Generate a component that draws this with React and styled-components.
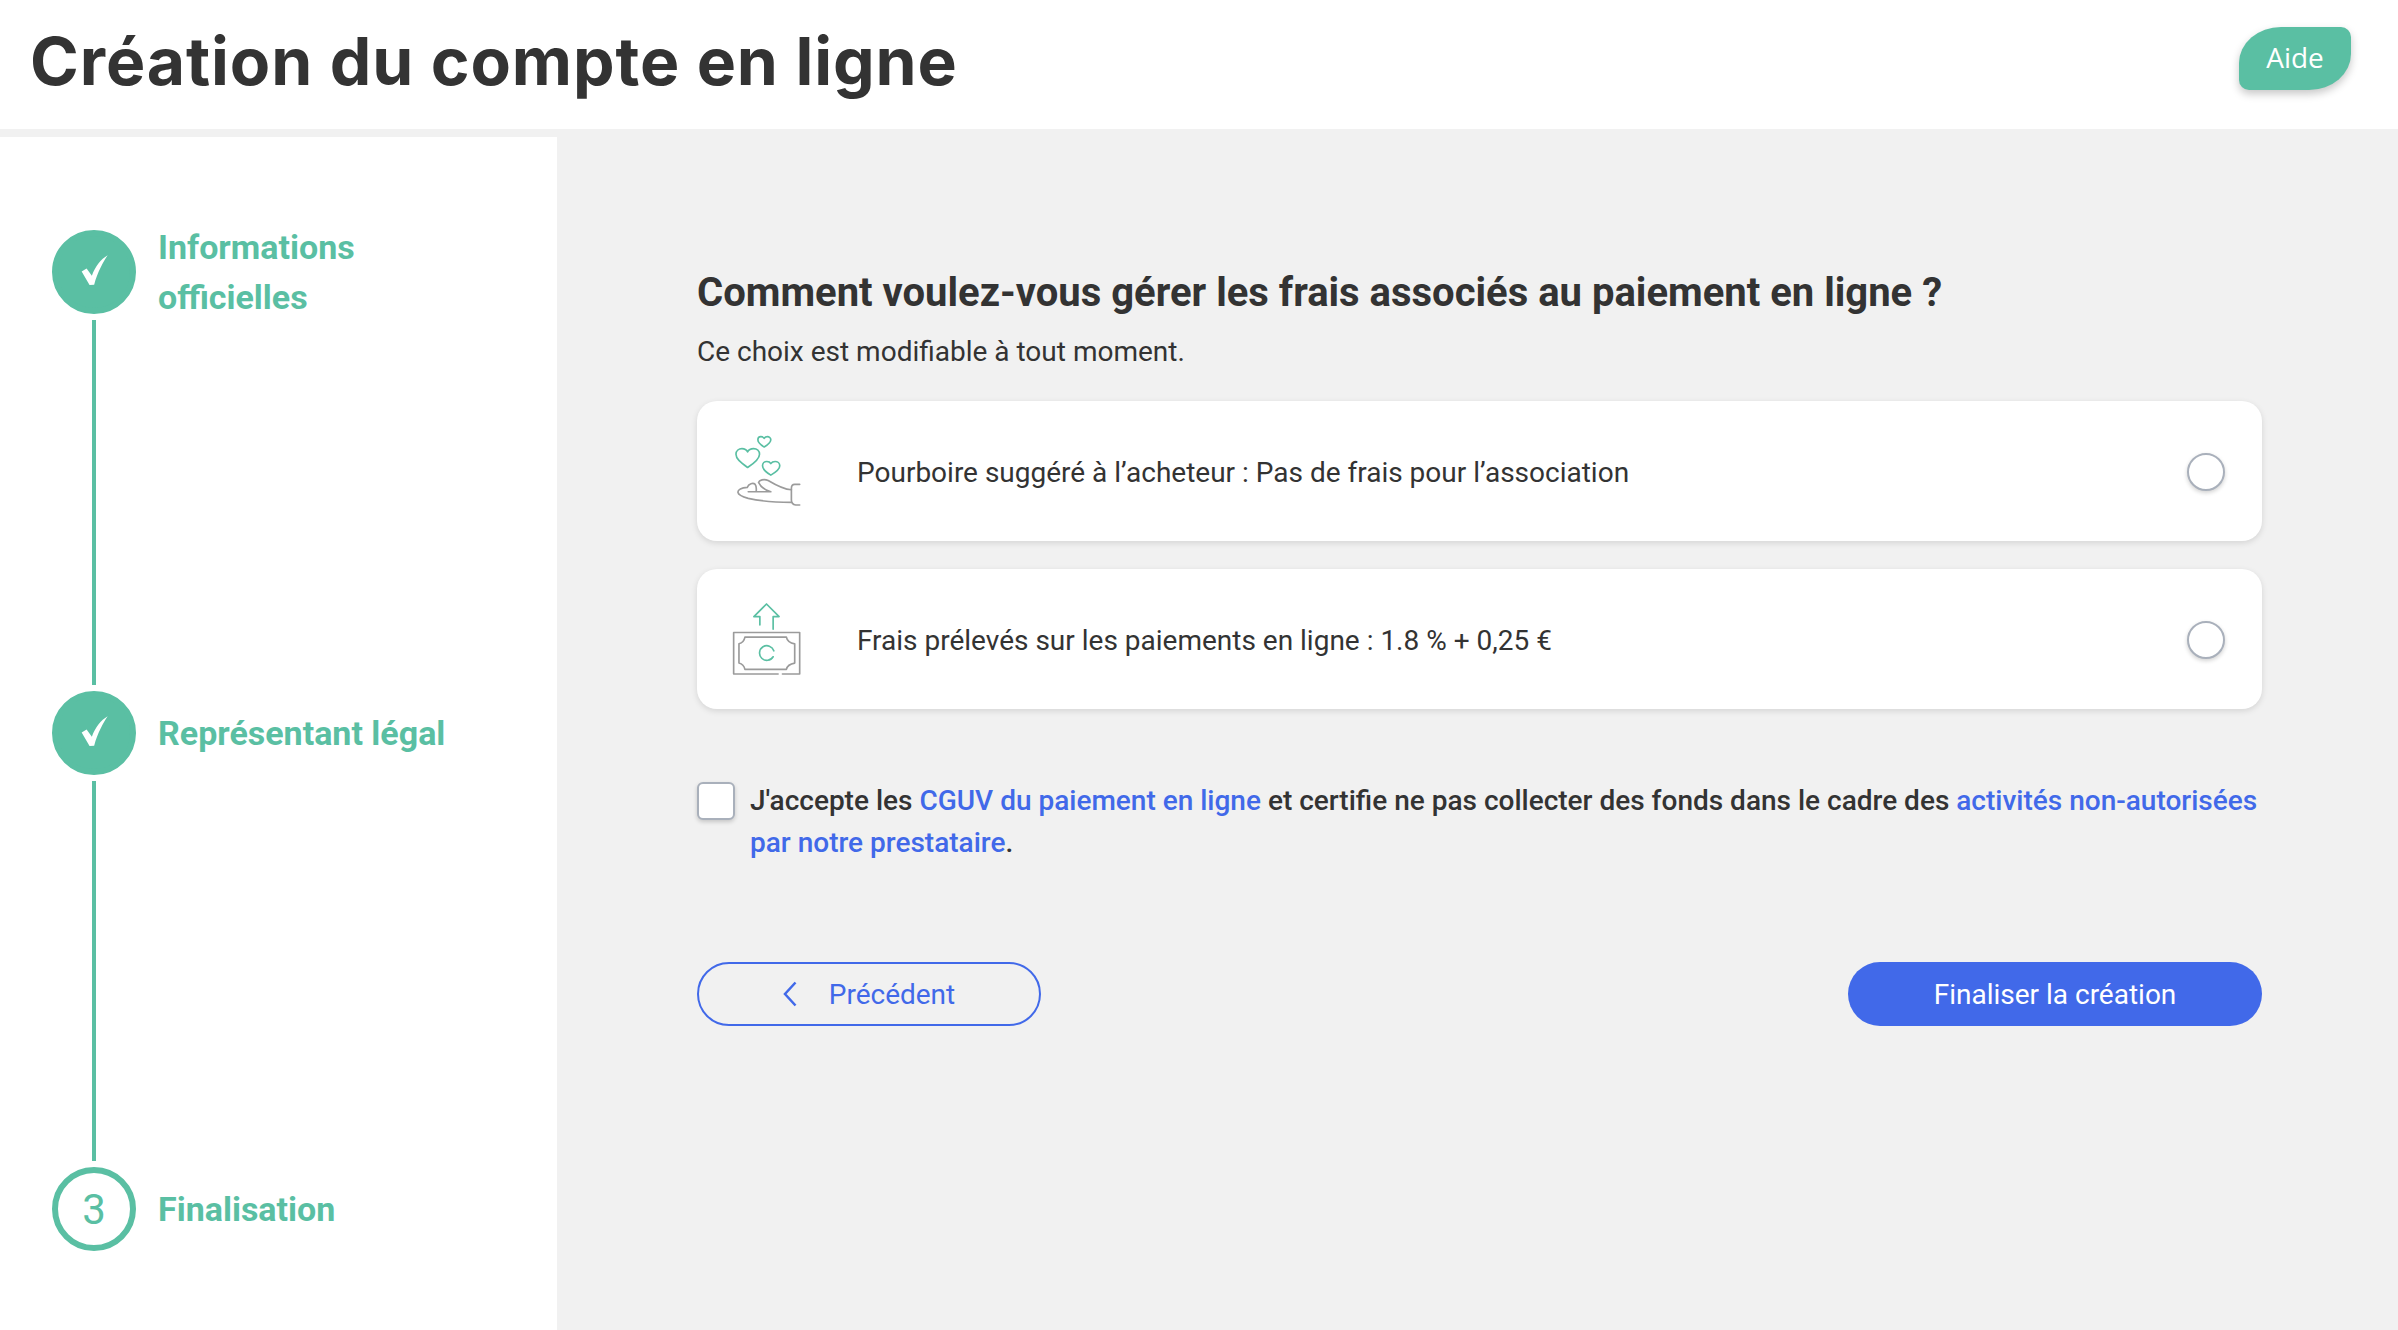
import styled, { createGlobalStyle } from "styled-components";

const TEAL = "#5abfa3";
const BLUE = "#4169e9";
const DARK = "#333333";
const GREY = "#9b9b9b";

const GlobalStyle = createGlobalStyle`
  html, body {
    margin: 0;
    padding: 0;
    background: #f1f1f1;
    font-family: "Roboto", "Liberation Sans", sans-serif;
    color: ${DARK};
  }
  * { box-sizing: border-box; }
`;

const Page = styled.div`
  width: 2398px;
  height: 1330px;
  display: flex;
  flex-direction: column;
  overflow: hidden;
`;

/* Top bar */
const Header = styled.header`
  height: 129px;
  flex: none;
  background: #fff;
  display: flex;
  align-items: center;
  justify-content: space-between;
  padding: 0 47px 0 30px;
`;

const Title = styled.h1`
  margin: 0 0 6px;
  font-family: "Inter", sans-serif;
  font-size: 66px;
  font-weight: 700;
  line-height: 1.2;
  letter-spacing: 0.9px;
  color: ${DARK};
`;

const HelpButton = styled.button`
  width: 112px;
  height: 63px;
  margin-top: -13px;
  border: 0;
  padding: 0 0 2px;
  background: ${TEAL};
  color: #fff;
  font-family: "Open Sans", sans-serif;
  font-size: 28px;
  border-radius: 42px 10px 42px 10px / 36px 10px 36px 10px;
  box-shadow: 0 4px 8px rgba(0, 0, 0, 0.22);
`;

const Content = styled.div`
  flex: 1;
  display: flex;
  min-height: 0;
`;

/* Left stepper */
const Sidebar = styled.aside`
  width: 557px;
  flex: none;
  margin-top: 8px;
  background: #fff;
  padding: 93px 0 0 52px;
  display: flex;
  flex-direction: column;
`;

const Step = styled.div`
  display: flex;
  align-items: center;
  gap: 22px;
  height: 84px;
`;

const StepCircle = styled.div`
  width: 84px;
  height: 84px;
  flex: none;
  border-radius: 50%;
  display: flex;
  align-items: center;
  justify-content: center;
  background: ${(p) => (p.$done ? TEAL : "#fff")};
  border: 6px solid ${TEAL};
  color: ${TEAL};
  font-size: 42px;
  font-weight: 400;
`;

const StepLabel = styled.div`
  font-size: 34px;
  font-weight: 700;
  line-height: 50px;
  color: ${TEAL};
`;

const Connector = styled.div`
  width: 4px;
  height: ${(p) => p.$height}px;
  margin: 6px 0 6px 40px;
  background: ${TEAL};
`;

/* Main column */
const Main = styled.main`
  flex: 1;
  padding: 139px 136px 0 140px;
`;

const Question = styled.h2`
  margin: 0;
  font-size: 40px;
  font-weight: 700;
  line-height: 50px;
  color: ${DARK};
`;

const Hint = styled.p`
  margin: 16px 0 31px;
  font-size: 28px;
  line-height: 36px;
`;

const OptionList = styled.div`
  display: flex;
  flex-direction: column;
  gap: 28px;
`;

const Option = styled.div`
  height: 140px;
  background: #fff;
  border-radius: 20px;
  box-shadow: 0 2px 6px rgba(0, 0, 0, 0.12);
  display: flex;
  align-items: center;
  padding: 0 37px 0 33px;
`;

const OptionIcon = styled.svg`
  width: 73px;
  height: 78px;
  flex: none;
  fill: none;
  stroke-width: 5;
  stroke-linecap: round;
  stroke-linejoin: round;
`;

const OptionText = styled.span`
  flex: 1;
  margin-left: 54px;
  padding-top: 4px;
  font-size: 28px;
  line-height: 36px;
`;

const Radio = styled.span`
  width: 38px;
  height: 38px;
  flex: none;
  margin-top: 2px;
  border-radius: 50%;
  background: #fff;
  border: 2px solid #a9b0bb;
  box-shadow: 0 2px 4px rgba(0, 0, 0, 0.18);
`;

const Consent = styled.div`
  display: flex;
  gap: 15px;
  margin-top: 71px;
`;

const Checkbox = styled.span`
  width: 38px;
  height: 38px;
  flex: none;
  margin-top: 2px;
  border-radius: 6px;
  background: #fff;
  border: 2px solid #a9b0bb;
  box-shadow: 0 2px 4px rgba(0, 0, 0, 0.18);
`;

const ConsentText = styled.p`
  margin: 0;
  font-size: 28px;
  font-weight: 500;
  line-height: 42px;
`;

const Link = styled.span`
  color: ${BLUE};
`;

const Actions = styled.div`
  display: flex;
  justify-content: space-between;
  margin-top: 98px;
`;

const PrevButton = styled.button`
  width: 344px;
  height: 64px;
  border: 2px solid ${BLUE};
  border-radius: 32px;
  background: transparent;
  color: ${BLUE};
  font-family: inherit;
  font-size: 28px;
  display: flex;
  align-items: center;
  justify-content: center;
  gap: 32px;
  padding: 0;
`;

const NextButton = styled.button`
  width: 414px;
  height: 64px;
  border: 0;
  border-radius: 32px;
  background: ${BLUE};
  color: #fff;
  font-family: inherit;
  font-size: 28px;
  padding: 0;
`;

const CheckIcon = styled.svg`
  width: 27px;
  height: 31px;
  margin-top: -3px;
`;

const CheckMark = () => (
  <CheckIcon viewBox="120 105 82 94">
    <path
      d="M122 155 L137 146 L153 168 C163 140 180 118 201 106 C188 125 170 158 160 195 L146 196 Z"
      fill="#fff"
    />
  </CheckIcon>
);

const TipIcon = () => (
  <OptionIcon viewBox="120 110 220 235">
    <g stroke={TEAL}>
      <path d="M173 217 C150 200 138 190 138 177 C138 166 147 160 156 160 C164 160 170 164 173 170 C176 164 183 160 191 160 C201 160 209 167 209 177 C209 190 196 202 173 217Z" />
      <path d="M223 155 C212 148 204 142 204 133 C204 127 209 124 213 124 C218 124 221 126 223 129 C225 126 228 124 233 124 C238 124 243 128 243 133 C243 142 234 148 223 155Z" />
      <path d="M243 240 C230 232 218 223 218 212 C218 204 224 199 231 199 C236 199 241 201 243 205 C246 201 250 199 256 199 C263 199 270 204 270 212 C270 223 257 232 243 240Z" />
    </g>
    <g stroke={GREY}>
      <path d="M330 268 H315 Q305 268 305 280 V315 Q305 328 318 330 H330" />
      <path d="M305 284 C285 283 255 268 235 256 C222 250 208 255 206 262 C212 275 225 285 243 290 H175" />
      <path d="M305 322 C270 322 220 320 175 310 C160 306 145 300 144 292 C143 283 155 278 172 277 C176 265 190 262 196 268 C199 272 200 278 199 288" />
    </g>
  </OptionIcon>
);

const FeeIcon = () => (
  <OptionIcon viewBox="120 615 220 235">
    <g stroke={GREY}>
      <path d="M265 838 H131 V713 H330 V838 H278" />
      <path d="M165 727 H290 C292 738 302 745 315 747 V805 C302 807 292 815 290 824 H165 C163 815 155 807 147 805 V747 C155 745 163 738 165 727Z" />
    </g>
    <g stroke={TEAL}>
      <path d="M250 703 V665 H268 L230 627 L192 665 H210 V690" />
      <path d="M252 768 A22 22 0 1 0 250 786" />
    </g>
  </OptionIcon>
);

const ChevronLeft = () => (
  <svg width="14" height="26" viewBox="0 0 14 26" fill="none" stroke={BLUE} strokeWidth="2.5">
    <path d="M12.5 1.5 L2 13 L12.5 24.5" />
  </svg>
);

export default function App() {
  return (
    <Page>
      <GlobalStyle />
      <Header>
        <Title>Création du compte en ligne</Title>
        <HelpButton>Aide</HelpButton>
      </Header>
      <Content>
        <Sidebar>
          <Step>
            <StepCircle $done><CheckMark /></StepCircle>
            <StepLabel>Informations<br />officielles</StepLabel>
          </Step>
          <Connector $height={365} />
          <Step>
            <StepCircle $done><CheckMark /></StepCircle>
            <StepLabel>Représentant légal</StepLabel>
          </Step>
          <Connector $height={380} />
          <Step>
            <StepCircle>3</StepCircle>
            <StepLabel>Finalisation</StepLabel>
          </Step>
        </Sidebar>
        <Main>
          <Question>Comment voulez-vous gérer les frais associés au paiement en ligne ?</Question>
          <Hint>Ce choix est modifiable à tout moment.</Hint>
          <OptionList>
            <Option>
              <TipIcon />
              <OptionText>Pourboire suggéré à l’acheteur : Pas de frais pour l’association</OptionText>
              <Radio />
            </Option>
            <Option>
              <FeeIcon />
              <OptionText>Frais prélevés sur les paiements en ligne : 1.8 % + 0,25 €</OptionText>
              <Radio />
            </Option>
          </OptionList>
          <Consent>
            <Checkbox />
            <ConsentText>
              J'accepte les <Link>CGUV du paiement en ligne</Link> et certifie ne pas collecter des fonds dans le cadre des <Link>activités non-autorisées par notre prestataire</Link>.
            </ConsentText>
          </Consent>
          <Actions>
            <PrevButton><ChevronLeft />Précédent</PrevButton>
            <NextButton>Finaliser la création</NextButton>
          </Actions>
        </Main>
      </Content>
    </Page>
  );
}
